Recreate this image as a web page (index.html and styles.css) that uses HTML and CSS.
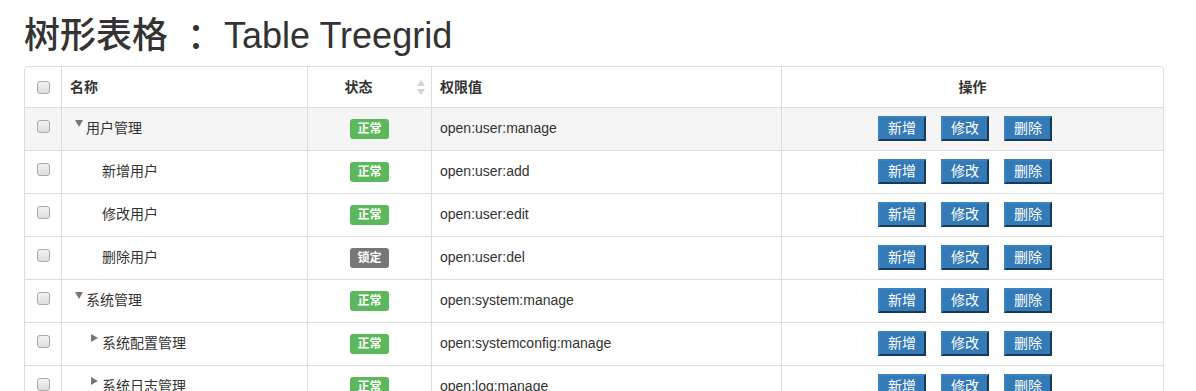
FILE: index.html
```html
<!DOCTYPE html>
<html lang="zh-CN">
<head>
  <meta charset="UTF-8" />
  <title>树形表格 Table Treegrid</title>
  <link rel="stylesheet" href="styles.css">
</head>
<body>
  <div class="container">
    <h1>树形表格 <span class="sep" lang="zh-TW">：</span> Table Treegrid</h1>

    <div class="table-box">
      <table class="tree-table">
        <thead>
          <tr>
            <th class="col-check"><span class="checkbox"></span></th>
            <th class="col-name">名称</th>
            <th class="col-status sortable">状态<svg class="sort-icon" width="8" height="15" viewBox="0 0 8 15"><path d="M4 0L8 6H0Z" fill="#d4d4d4"/><path d="M4 15L8 9H0Z" fill="#d4d4d4"/></svg></th>
            <th class="col-perm">权限值</th>
            <th class="col-ops">操作</th>
          </tr>
        </thead>
        <tbody>
          <tr class="hover">
            <td class="col-check"><span class="checkbox"></span></td>
            <td class="col-name"><span class="expander open"></span>用户管理</td>
            <td class="col-status"><span class="label ok">正常</span></td>
            <td class="col-perm">open:user:manage</td>
            <td class="col-ops"><div class="ops"><button class="btn">新增</button><button class="btn">修改</button><button class="btn">删除</button></div></td>
          </tr>
          <tr>
            <td class="col-check"><span class="checkbox"></span></td>
            <td class="col-name"><span class="indent"></span><span class="expander"></span>新增用户</td>
            <td class="col-status"><span class="label ok">正常</span></td>
            <td class="col-perm">open:user:add</td>
            <td class="col-ops"><div class="ops"><button class="btn">新增</button><button class="btn">修改</button><button class="btn">删除</button></div></td>
          </tr>
          <tr>
            <td class="col-check"><span class="checkbox"></span></td>
            <td class="col-name"><span class="indent"></span><span class="expander"></span>修改用户</td>
            <td class="col-status"><span class="label ok">正常</span></td>
            <td class="col-perm">open:user:edit</td>
            <td class="col-ops"><div class="ops"><button class="btn">新增</button><button class="btn">修改</button><button class="btn">删除</button></div></td>
          </tr>
          <tr>
            <td class="col-check"><span class="checkbox"></span></td>
            <td class="col-name"><span class="indent"></span><span class="expander"></span>删除用户</td>
            <td class="col-status"><span class="label locked">锁定</span></td>
            <td class="col-perm">open:user:del</td>
            <td class="col-ops"><div class="ops"><button class="btn">新增</button><button class="btn">修改</button><button class="btn">删除</button></div></td>
          </tr>
          <tr>
            <td class="col-check"><span class="checkbox"></span></td>
            <td class="col-name"><span class="expander open"></span>系统管理</td>
            <td class="col-status"><span class="label ok">正常</span></td>
            <td class="col-perm">open:system:manage</td>
            <td class="col-ops"><div class="ops"><button class="btn">新增</button><button class="btn">修改</button><button class="btn">删除</button></div></td>
          </tr>
          <tr>
            <td class="col-check"><span class="checkbox"></span></td>
            <td class="col-name"><span class="indent"></span><span class="expander closed"></span>系统配置管理</td>
            <td class="col-status"><span class="label ok">正常</span></td>
            <td class="col-perm">open:systemconfig:manage</td>
            <td class="col-ops"><div class="ops"><button class="btn">新增</button><button class="btn">修改</button><button class="btn">删除</button></div></td>
          </tr>
          <tr>
            <td class="col-check"><span class="checkbox"></span></td>
            <td class="col-name"><span class="indent"></span><span class="expander closed"></span>系统日志管理</td>
            <td class="col-status"><span class="label ok">正常</span></td>
            <td class="col-perm">open:log:manage</td>
            <td class="col-ops"><div class="ops"><button class="btn">新增</button><button class="btn">修改</button><button class="btn">删除</button></div></td>
          </tr>
        </tbody>
      </table>
    </div>
  </div>
</body>
</html>
```

FILE: styles.css
```css
* {
  box-sizing: border-box;
}

body {
  margin: 0;
  font-family: "Liberation Sans", Arial, "Noto Sans CJK SC", sans-serif;
  font-size: 14px;
  line-height: 20px;
  color: #333;
  background-color: #fff;
}

.container {
  padding: 0 32px 20px 24px;
}

h1 {
  margin: 16px 0 10px;
  font-size: 36px;
  font-weight: 500;
  line-height: 40px;
  color: #333;
}

h1 .sep {
  font-family: "Noto Sans CJK TC", sans-serif;
  line-height: 20px;
  vertical-align: -3px;
}

.table-box {
  border: 1px solid #ddd;
  border-radius: 4px;
  overflow: hidden;
}

.tree-table {
  width: 100%;
  table-layout: fixed;
  border-collapse: separate;
  border-spacing: 0;
}

.tree-table th,
.tree-table td {
  padding: 8px;
  border-left: 1px solid #ddd;
  vertical-align: middle;
  white-space: nowrap;
}

.tree-table th {
  height: 40px;
  font-weight: bold;
  text-align: left;
}

.tree-table td {
  height: 43px;
  padding-top: 7px;
  padding-bottom: 9px;
  border-top: 1px solid #ddd;
}

.tree-table tr.hover td {
  background-color: #f5f5f5;
}

.tree-table .col-check {
  width: 36px;
  border-left: none;
  text-align: center;
  vertical-align: top;
  padding: 12px 0 0;
}

.tree-table td.col-check {
  padding-top: 10px;
}

.col-name {
  width: 246px;
}

.col-status {
  width: 124px;
  text-align: center;
}

.tree-table th.col-status {
  text-align: center;
}

.sortable {
  position: relative;
  padding-right: 30px !important;
}

.sort-icon {
  position: absolute;
  right: 6px;
  top: 13px;
}

.col-perm {
  width: 350px;
}

.tree-table th.col-ops,
.col-ops {
  text-align: center;
}

.checkbox {
  display: inline-block;
  width: 13px;
  height: 13px;
  border: 1px solid #a9a9a9;
  border-radius: 3px;
  background: linear-gradient(#f2f2f2, #dedede);
}

.indent,
.expander {
  display: inline-block;
  width: 16px;
  height: 16px;
  vertical-align: top;
  position: relative;
}

.expander.open::before {
  content: "";
  position: absolute;
  left: 5px;
  top: 2px;
  width: 0;
  height: 0;
  border-left: 4px solid transparent;
  border-right: 4px solid transparent;
  border-top: 7px solid #777;
}

.expander.closed::before {
  content: "";
  position: absolute;
  left: 5px;
  top: 1px;
  width: 0;
  height: 0;
  border-top: 4px solid transparent;
  border-bottom: 4px solid transparent;
  border-left: 7px solid #777;
}

.label {
  display: inline-block;
  padding: 3px 7px;
  font-size: 12px;
  line-height: 14px;
  font-weight: bold;
  color: #fff;
  border-radius: 3px;
  vertical-align: middle;
}

.label.ok {
  background-color: #5cb85c;
}

.label.locked {
  background-color: #777;
}

.ops {
  display: flex;
  justify-content: center;
}

.btn {
  width: 48px;
  height: 25px;
  margin: 0 15px 0 0;
  padding: 0;
  font-family: inherit;
  font-size: 14px;
  line-height: 21px;
  color: #fff;
  background-color: #337ab7;
  border-style: solid;
  border-width: 2px;
  border-color: #3b82c0 #173a5a #173a5a #3b82c0;
  cursor: pointer;
}
```
